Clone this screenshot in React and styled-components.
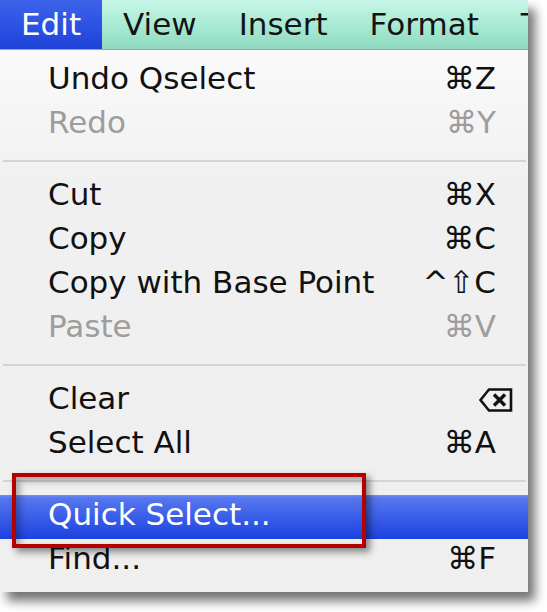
import React from 'react';
import styled, { createGlobalStyle } from 'styled-components';

const GlobalStyle = createGlobalStyle`
  html, body {
    margin: 0;
    padding: 0;
    background: #ffffff;
  }
  body {
    font-family: 'DejaVu Sans', 'Liberation Sans', sans-serif;
  }
`;

const Page = styled.div`
  width: 547px;
  height: 612px;
  overflow: hidden;
  background: #ffffff;
`;

const Menu = styled.div`
  position: relative;
  width: 528px;
  height: 592px;
  display: flex;
  flex-direction: column;
  overflow: hidden;
  box-shadow: 7px 9px 10px rgba(0, 0, 0, 0.55);
  background: #efefef;
`;

const MenuBar = styled.div`
  height: 50px;
  width: 100%;
  min-width: 0;
  display: flex;
  overflow: hidden;
  white-space: nowrap;
  background: linear-gradient(#c8f6e8, #a6e9d2 55%, #8fd9bf);
  border-bottom: 1px solid #7fb3a4;
  box-sizing: border-box;
`;

const BarItem = styled.div`
  flex-shrink: 0;
  padding: 0 21px;
  font-size: 31px;
  line-height: 49px;
  color: ${p => (p.active ? '#ffffff' : '#141414')};
  background: ${p =>
    p.active ? 'linear-gradient(#3d63ea, #2a4fe2 60%, #1f42d6)' : 'transparent'};
`;

const Body = styled.div`
  flex: 1;
  display: flex;
  flex-direction: column;
  padding: 9px 0 8px;
  background: linear-gradient(#fafafa, #f0f0f0 25%, #efefef);
`;

const Row = styled.div`
  height: 44px;
  box-sizing: border-box;
  padding: 0 32px 6px 48px;
  display: flex;
  align-items: center;
  justify-content: space-between;
  font-size: 31px;
  line-height: 38px;
  white-space: nowrap;
  color: ${p => (p.selected ? '#ffffff' : p.disabled ? '#9d9d9d' : '#111111')};
  background: ${p =>
    p.selected
      ? 'linear-gradient(#7290f2 0px, #5677ee 3px, #3a5ee8 50%, #1c42e0)'
      : 'transparent'};
`;

const Shortcut = styled.span`
  display: flex;
  align-items: center;
`;

const Separator = styled.div`
  height: 28px;
  display: flex;
  align-items: center;
  padding: 0 2px 0 3px;

  &::after {
    content: '';
    flex: 1;
    height: 2px;
    background: #d4d4d4;
  }
`;

const DeleteKey = styled.svg`
  width: 34px;
  height: 24px;
  margin-right: -17px;
  margin-top: 4px;
`;

const Callout = styled.div`
  position: absolute;
  left: 12px;
  top: 473px;
  width: 354px;
  height: 75px;
  box-sizing: border-box;
  border: 4px solid #b30000;
  box-shadow: 4px 4px 7px rgba(0, 0, 0, 0.45),
    inset 4px 4px 7px rgba(0, 0, 0, 0.3);
  pointer-events: none;
`;

const DeleteIcon = () => (
  <DeleteKey viewBox="0 0 34 24">
    <path
      d="M1.5 12 L10 1.5 H32 V22.5 H10 Z"
      fill="none"
      stroke="#111"
      strokeWidth="2.6"
      strokeLinejoin="miter"
    />
    <path
      d="M15 6.5 L26 17.5 M26 6.5 L15 17.5"
      stroke="#111"
      strokeWidth="3.4"
      strokeLinecap="butt"
    />
  </DeleteKey>
);

const items = [
  { label: 'Undo Qselect', key: '⌘Z' },
  { label: 'Redo', key: '⌘Y', disabled: true },
  { sep: true },
  { label: 'Cut', key: '⌘X' },
  { label: 'Copy', key: '⌘C' },
  { label: 'Copy with Base Point', key: '^⇧C' },
  { label: 'Paste', key: '⌘V', disabled: true },
  { sep: true },
  { label: 'Clear', icon: true },
  { label: 'Select All', key: '⌘A' },
  { sep: true },
  { label: 'Quick Select...', selected: true },
  { label: 'Find...', key: '⌘F' },
];

export default function App() {
  return (
    <Page>
      <GlobalStyle />
      <Menu>
        <MenuBar>
          <BarItem active>Edit</BarItem>
          <BarItem>View</BarItem>
          <BarItem>Insert</BarItem>
          <BarItem>Format</BarItem>
          <BarItem>Tools</BarItem>
        </MenuBar>
        <Body>
          {items.map((it, i) =>
            it.sep ? (
              <Separator key={i} />
            ) : (
              <Row key={i} disabled={it.disabled} selected={it.selected}>
                <span>{it.label}</span>
                <Shortcut>{it.icon ? <DeleteIcon /> : it.key}</Shortcut>
              </Row>
            )
          )}
        </Body>
        <Callout />
      </Menu>
    </Page>
  );
}
